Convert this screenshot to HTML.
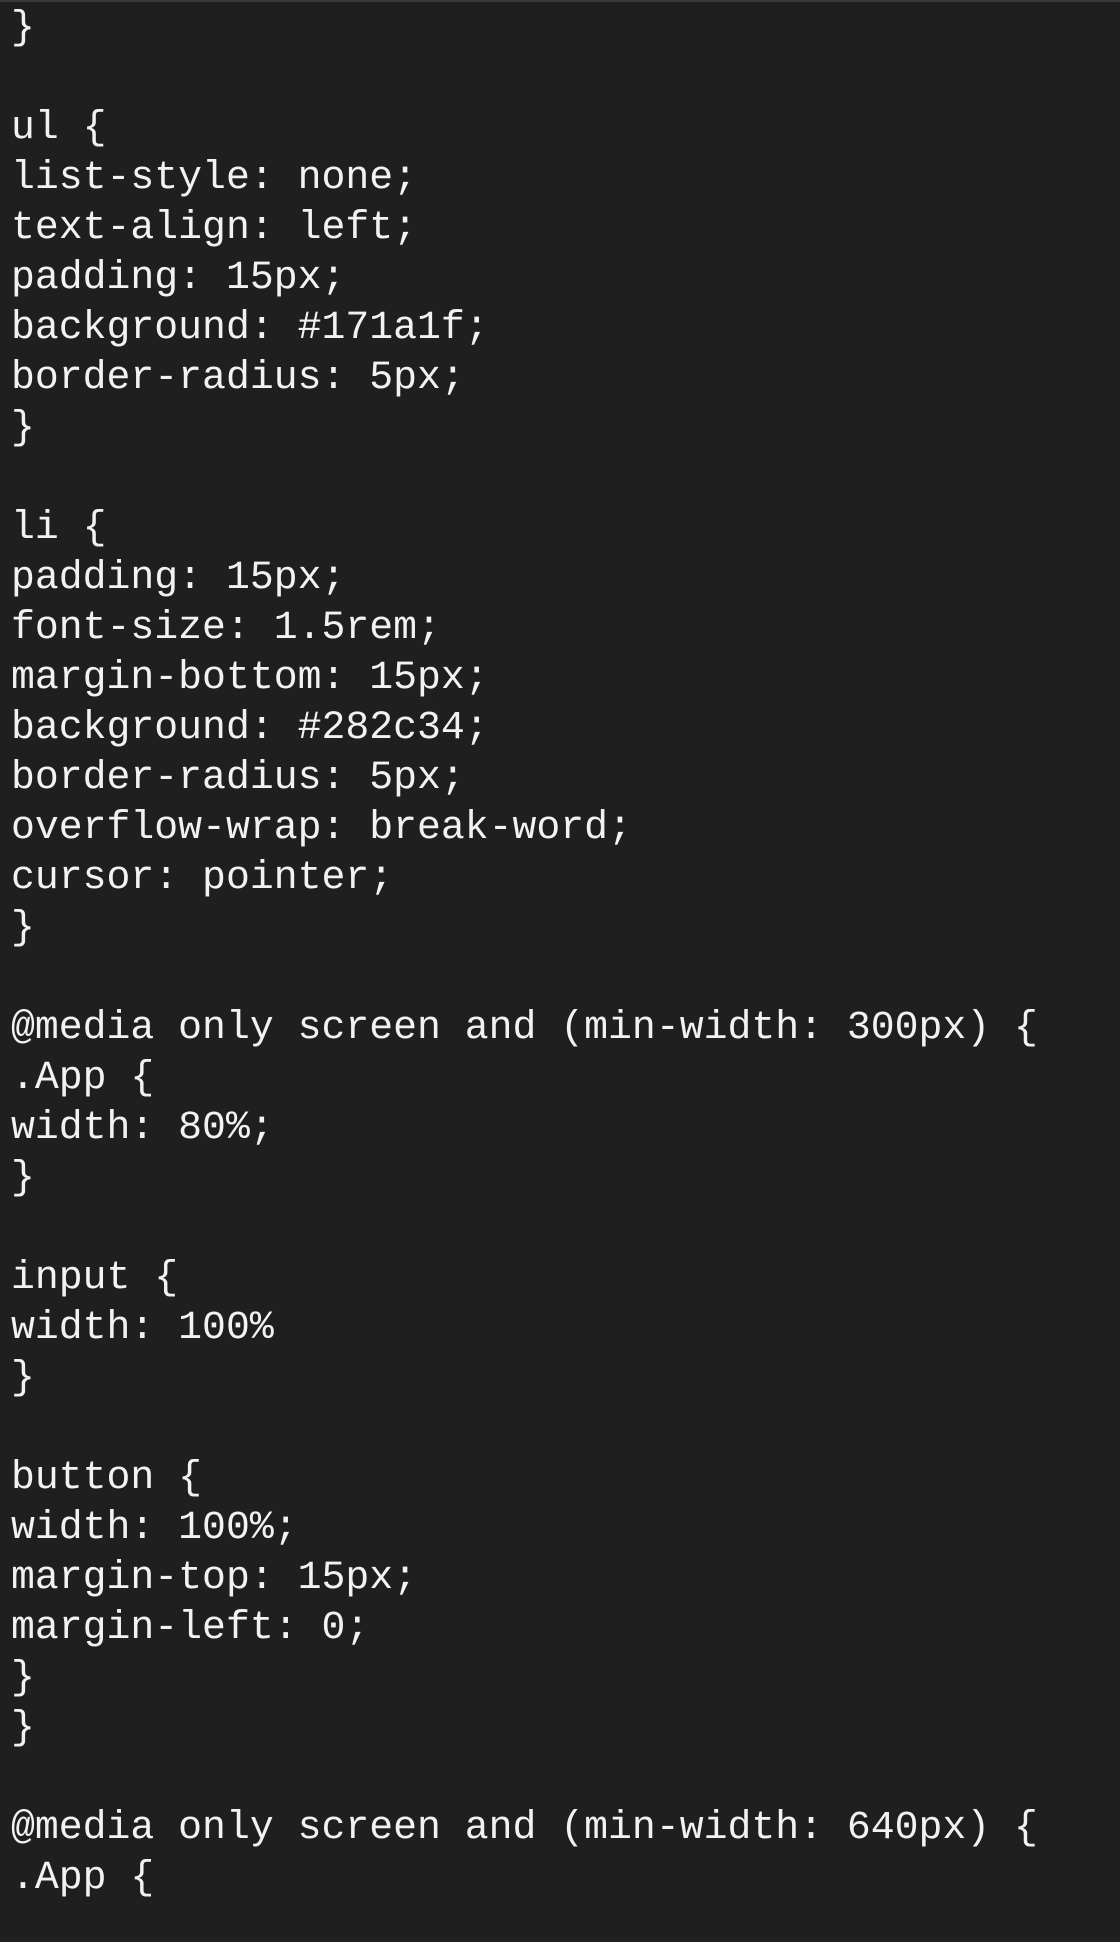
<!DOCTYPE html>
<html><head><meta charset="utf-8"><style>
html,body{margin:0;padding:0;}
body{width:1120px;height:1942px;overflow:hidden;background:#1f1f1f;border-top:2px solid #3a3a3c;box-sizing:border-box;}
pre{margin:0;padding:0 0 0 11px;font-family:"Liberation Mono",monospace;font-size:39.8px;line-height:50px;color:#f2f2f2;white-space:pre;position:relative;top:1px;}
</style></head><body><pre>}

ul {
list-style: none;
text-align: left;
padding: 15px;
background: #171a1f;
border-radius: 5px;
}

li {
padding: 15px;
font-size: 1.5rem;
margin-bottom: 15px;
background: #282c34;
border-radius: 5px;
overflow-wrap: break-word;
cursor: pointer;
}

@media only screen and (min-width: 300px) {
.App {
width: 80%;
}

input {
width: 100%
}

button {
width: 100%;
margin-top: 15px;
margin-left: 0;
}
}

@media only screen and (min-width: 640px) {
.App {
</pre></body></html>
